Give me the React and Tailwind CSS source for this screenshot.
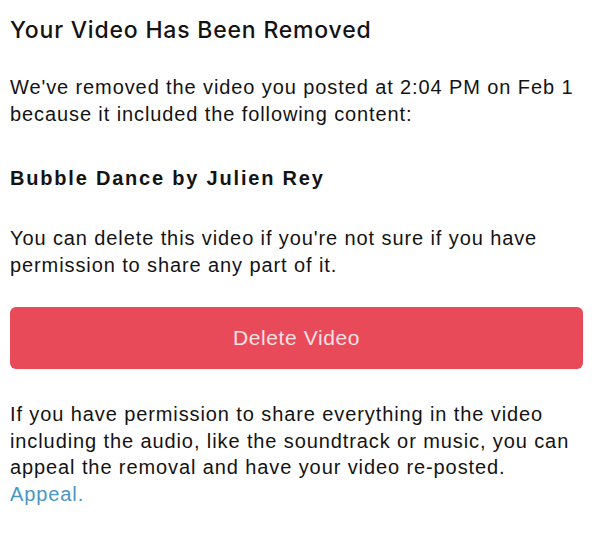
export default function App() {
  return (
    <div
      className="w-[600px] h-[534px] bg-white text-[#131313] pl-[10px] pt-[16px]"
      style={{ fontFamily: '"Liberation Sans", Arial, sans-serif' }}
    >
      <h1
        className="text-[23px] leading-[29px] font-medium tracking-[0.8px] whitespace-nowrap"
        style={{ fontFamily: 'Inter, "Liberation Sans", sans-serif' }}
      >
        Your Video Has Been Removed
      </h1>

      <p className="mt-[29px] text-[20px] leading-[27px] tracking-[0.9px] whitespace-nowrap">
        We've removed the video you posted at 2:04 PM on Feb 1
        <br />
        because it included the following content:
      </p>

      <p className="mt-[37px] text-[20px] leading-[27px] font-bold tracking-[1.8px] whitespace-nowrap">Bubble Dance by Julien Rey</p>

      <p className="mt-[33px] text-[20px] leading-[27px] tracking-[0.9px] whitespace-nowrap">
        You can delete this video if you're not sure if you have
        <br />
        permission to share any part of it.
      </p>

      <button className="mt-[28px] w-[573px] h-[62px] rounded-[6px] bg-[#e94a59] text-[#f9e0e3] text-[21px] tracking-[0.6px] flex items-center justify-center">
        Delete Video
      </button>

      <p className="mt-[32px] text-[20px] leading-[26.5px] tracking-[0.9px] whitespace-nowrap">
        If you have permission to share everything in the video
        <br />
        including the audio, like the soundtrack or music, you can
        <br />
        appeal the removal and have your video re-posted.
        <br />
        <a className="text-[#4a96c4]">Appeal.</a>
      </p>
    </div>
  );
}
